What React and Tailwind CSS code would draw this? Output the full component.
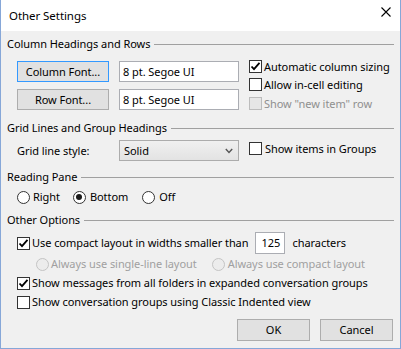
import React from "react";

const font = { fontFamily: '"Noto Sans", "Open Sans", sans-serif' };

function Check({ checked, disabled }) {
  return (
    <span
      className={
        "inline-flex w-[13px] h-[13px] shrink-0 items-center justify-center border " +
        (disabled ? "border-[#bcbcbc] bg-[#e6e6e6]" : "border-[#333333] bg-white")
      }
    >
      {checked && (
        <svg width="11" height="11" viewBox="0 0 11 11">
          <polyline points="1.5,5.5 4,8.2 9.5,1.8" fill="none" stroke="#000" strokeWidth="1.8" />
        </svg>
      )}
    </span>
  );
}

function Radio({ checked, disabled }) {
  return (
    <span
      className={
        "inline-flex w-[13px] h-[13px] shrink-0 items-center justify-center rounded-full border " +
        (disabled ? "border-[#c4c4c4] bg-[#ececec]" : "border-[#333333] bg-white")
      }
    >
      {checked && <span className="w-[6px] h-[6px] rounded-full bg-[#1a1a1a]" />}
    </span>
  );
}

function Heading({ children, className = "" }) {
  return (
    <div className={"flex items-center h-[16px] " + className}>
      <span className="whitespace-nowrap">{children}</span>
      <span className="flex-1 ml-[4px] border-t border-[#a0a0a0]" />
    </div>
  );
}

export default function App() {
  return (
    <div
      className="w-[401px] h-[349px] bg-[#f0f0f0] border-l border-r border-b border-[#86a7d8] flex flex-col text-[11px] tracking-[-0.06px] text-black leading-[16px] whitespace-nowrap"
      style={font}
    >
      <div className="h-[31px] bg-white flex justify-between">
        <span className="pl-[8px] mt-[8px] text-[11.5px]">Other Settings</span>
        <svg className="mt-[7px] mr-[9px]" width="10" height="10" viewBox="0 0 10 10">
          <path d="M0.5 0.5 L9.5 9.5 M9.5 0.5 L0.5 9.5" stroke="#000" strokeWidth="1.1" />
        </svg>
      </div>

      <div className="flex flex-col pl-[6px] pr-[6px]">
        <Heading className="mt-[5px]">Column Headings and Rows</Heading>

        <div className="flex mt-[8px]">
          <div className="flex flex-col pl-[10px]">
            <div className="flex mt-[1px]">
              <div className="w-[92px] h-[21px] flex items-center justify-center border border-[#3399ff] bg-[#e1e1e1]">
                Column Font...
              </div>
              <div className="ml-[10px] w-[120px] h-[21px] flex items-center pl-[3px] border border-[#abadb3] bg-white">
                8 pt. Segoe UI
              </div>
            </div>
            <div className="flex mt-[7px]">
              <div className="w-[92px] h-[21px] flex items-center justify-center border border-[#adadad] bg-[#e1e1e1]">
                Row Font...
              </div>
              <div className="ml-[10px] w-[120px] h-[21px] flex items-center pl-[3px] border border-[#abadb3] bg-white">
                8 pt. Segoe UI
              </div>
            </div>
          </div>
          <div className="flex flex-col ml-[10px] gap-[5px]">
            <div className="flex items-center h-[13px]">
              <Check checked />
              <span className="ml-[2px]">Automatic column sizing</span>
            </div>
            <div className="flex items-center h-[13px]">
              <Check />
              <span className="ml-[2px]">Allow in-cell editing</span>
            </div>
            <div className="flex items-center h-[13px] mt-[1px]">
              <Check disabled />
              <span className="ml-[2px] text-[#8f8f8f]">Show "new item" row</span>
            </div>
          </div>
        </div>

        <Heading className="mt-[10px]">Grid Lines and Group Headings</Heading>

        <div className="flex mt-[4px]">
          <div className="w-[112px] pl-[10px] h-[21px] flex items-center">Grid line style:</div>
          <div className="w-[120px] h-[21px] flex items-center justify-between pl-[4px] pr-[5px] border border-[#acacac] bg-gradient-to-b from-[#f0f0f0] to-[#e3e3e3]">
            <span>Solid</span>
            <svg width="8" height="6" viewBox="0 0 8 6">
              <polyline points="0.8,1 4,4.5 7.2,1" fill="none" stroke="#555" strokeWidth="1.4" />
            </svg>
          </div>
          <div className="flex items-center h-[13px] ml-[10px] mt-[2px]">
            <Check />
            <span className="ml-[3px]">Show items in Groups</span>
          </div>
        </div>

        <Heading className="mt-[8px]">Reading Pane</Heading>

        <div className="flex items-center h-[16px] mt-[4px] pl-[10px]">
          <Radio />
          <span className="ml-[3px]">Right</span>
          <span className="ml-[13px] flex"><Radio checked /></span>
          <span className="ml-[4px]">Bottom</span>
          <span className="ml-[14px] flex"><Radio /></span>
          <span className="ml-[4px]">Off</span>
        </div>

        <Heading className="mt-[7px]">Other Options</Heading>

        <div className="flex items-center h-[22px] mt-[4px] pl-[10px]">
          <Check checked />
          <span className="ml-[2px]">Use compact layout in widths smaller than</span>
          <div className="ml-[7px] w-[30px] h-[22px] flex items-center pl-[5px] border border-[#abadb3] bg-white">
            125
          </div>
          <span className="ml-[7px]">characters</span>
        </div>

        <div className="flex items-center h-[16px] mt-[2px] pl-[29px] text-[#a0a0a0]">
          <Radio disabled />
          <span className="ml-[2px]">Always use single-line layout</span>
          <span className="ml-[15px] flex"><Radio disabled /></span>
          <span className="ml-[3px]">Always use compact layout</span>
        </div>

        <div className="flex items-center h-[16px] mt-[3px] pl-[10px]">
          <Check checked />
          <span className="ml-[2px]">Show messages from all folders in expanded conversation groups</span>
        </div>

        <div className="flex items-center h-[16px] mt-[3px] pl-[10px]">
          <Check />
          <span className="ml-[2px]">Show conversation groups using Classic Indented view</span>
        </div>

        <div className="flex justify-end mt-[9px] pr-[1px] gap-[10px]">
          <div className="w-[73px] h-[22px] flex items-center justify-center border border-[#adadad] bg-[#e1e1e1]">
            OK
          </div>
          <div className="w-[73px] h-[22px] flex items-center justify-center border border-[#adadad] bg-[#e1e1e1]">
            Cancel
          </div>
        </div>
      </div>
    </div>
  );
}
